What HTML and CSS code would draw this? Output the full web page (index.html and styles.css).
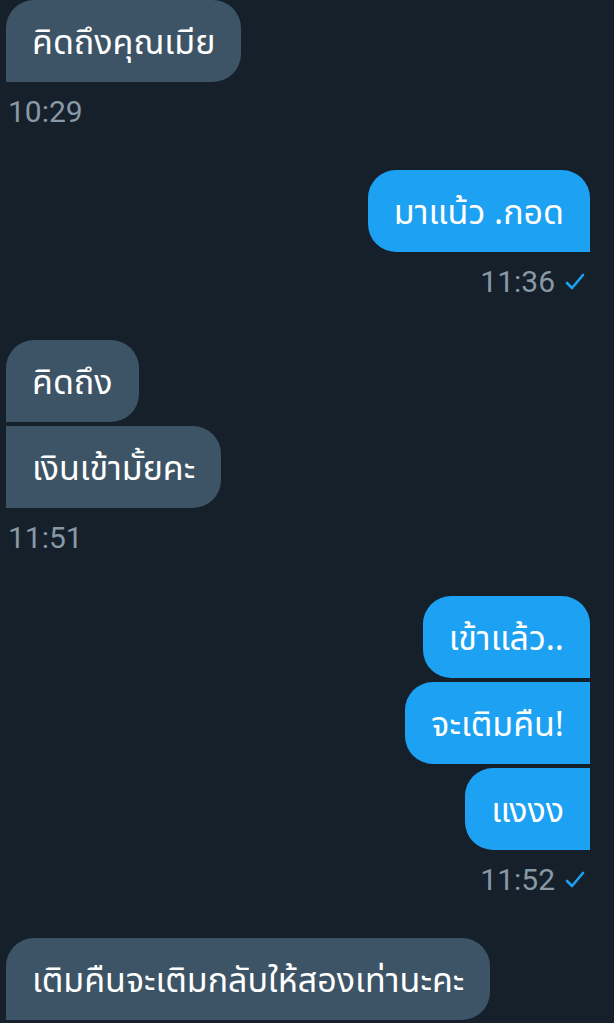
FILE: index.html
```html
<!DOCTYPE html>
<html lang="th">
<head>
<meta charset="utf-8">
<link rel="stylesheet" href="styles.css">
</head>
<body>
<div class="chat">
  <div class="group in">
    <div class="bubble first last">คิดถึงคุณเมีย</div>
    <div class="time">10:29</div>
  </div>
  <div class="group out">
    <div class="bubble first last">มาแน้ว .กอด</div>
    <div class="time">11:36 <svg class="check" viewBox="0 0 20 18"><path d="M2 10 L7 15 L18 2"/></svg></div>
  </div>
  <div class="group in">
    <div class="bubble first">คิดถึง</div>
    <div class="bubble last">เงินเข้ามั้ยคะ</div>
    <div class="time">11:51</div>
  </div>
  <div class="group out">
    <div class="bubble first">เข้าแล้ว..</div>
    <div class="bubble">จะเติมคืน!</div>
    <div class="bubble last">แงงง</div>
    <div class="time">11:52 <svg class="check" viewBox="0 0 20 18"><path d="M2 10 L7 15 L18 2"/></svg></div>
  </div>
  <div class="group in">
    <div class="bubble first last">เติมคืนจะเติมกลับให้สองเท่านะคะ</div>
  </div>
</div>
</body>
</html>
```
FILE: styles.css
```css
html, body {
  margin: 0;
  padding: 0;
  background: #15202b;
}
body {
  font-family: "Noto Sans", "Noto Sans Thai", Roboto, sans-serif;
  overflow: hidden;
}
.chat {
  display: flex;
  flex-direction: column;
  padding: 0 24px 0 6px;
}
.group {
  display: flex;
  flex-direction: column;
  gap: 4px;
  margin-bottom: 40px;
}
.group.in { align-items: flex-start; }
.group.out { align-items: flex-end; }
.bubble {
  height: 82px;
  line-height: 82px;
  padding: 0 26px;
  font-size: 34px;
  color: #ffffff;
  border-radius: 28px;
  box-sizing: border-box;
  white-space: nowrap;
}
.in .bubble {
  background: #3d5466;
  border-top-left-radius: 0;
  border-bottom-left-radius: 0;
}
.in .bubble.first { border-top-left-radius: 28px; }
.out .bubble {
  background: #1da1f2;
  border-top-right-radius: 0;
  border-bottom-right-radius: 0;
}
.out .bubble.first { border-top-right-radius: 28px; }
.time {
  margin-top: 8px;
  height: 36px;
  line-height: 36px;
  font-family: Roboto, sans-serif;
  font-size: 30px;
  color: #8899a6;
  display: flex;
  align-items: center;
  gap: 10px;
}
.in .time { padding-left: 2px; }
.out .time { padding-right: 5px; }
.check {
  width: 20px;
  height: 18px;
  fill: none;
  stroke: #1da1f2;
  stroke-width: 2.6;
  stroke-linecap: round;
  stroke-linejoin: round;
}
```
